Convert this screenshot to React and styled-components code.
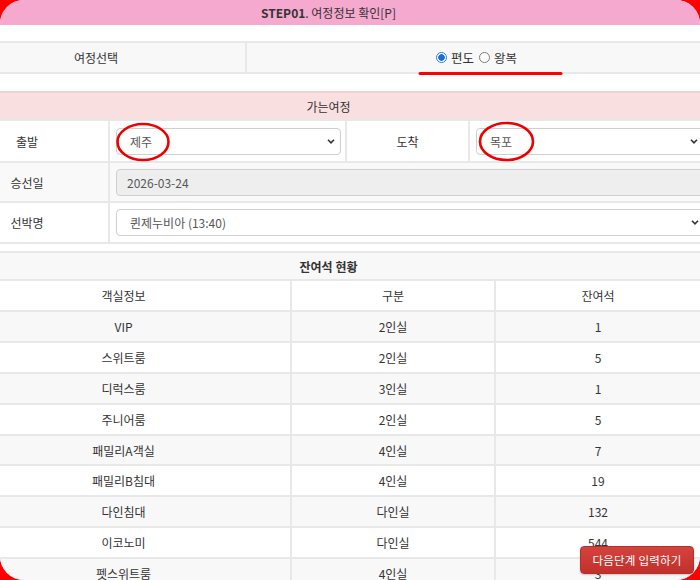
import React from "react";
import styled, { createGlobalStyle } from "styled-components";

const GlobalStyle = createGlobalStyle`
  *, *::before, *::after { box-sizing: border-box; }
  html, body { margin: 0; padding: 0; background: #ff0000; }
  body {
    font-family: "Noto Sans CJK KR", "Noto Sans", sans-serif;
    font-size: 12px;
    color: #333;
  }
`;

const Frame = styled.div`
  position: relative;
  width: 700px;
  height: 580px;
  border-radius: 24px;
  overflow: hidden;
  background: #fff;
`;

const Page = styled.div`
  width: 760px;
  margin-left: -43px;
  display: flex;
  flex-direction: column;
`;

const TitleBar = styled.div`
  width: 743px;
  height: 25px;
  background: #f5a9cf;
  display: flex;
  align-items: center;
  justify-content: center;
  font-size: 12px;
  color: #333;
  b { font-weight: 700; }
`;

const Spacer = styled.div`
  height: ${(p) => p.$h}px;
`;

const RouteRow = styled.div`
  width: 743px;
  height: 33px;
  display: grid;
  grid-template-columns: 290px 1fr;
  background: #f8f8f8;
  border-top: 2px solid #e8e8e8;
  border-bottom: 2px solid #e8e8e8;
`;

const RouteLabel = styled.div`
  display: flex;
  align-items: center;
  justify-content: center;
  padding-right: 10px;
  border-right: 2px solid #e8e8e8;
`;

const RadioGroup = styled.div`
  display: flex;
  align-items: center;
  justify-content: center;
  padding-left: 8px;
  gap: 3px;
  font-size: 12.5px;
  color: #333;
`;

const RadioDot = styled.span`
  display: inline-block;
  width: 11px;
  height: 11px;
  border-radius: 50%;
  border: 1px solid ${(p) => (p.$on ? "#2b7bd6" : "#7a7a7a")};
  background: ${(p) =>
    p.$on ? "radial-gradient(circle, #1a6fd6 0 3px, #fff 3.5px)" : "#fff"};
  margin-right: 1px;
`;

const RadioText = styled.span`
  margin-right: 2px;
`;

const SectionHead = styled.div`
  width: 743px;
  height: 30px;
  display: flex;
  align-items: center;
  justify-content: center;
  background: ${(p) => p.$bg};
  border-top: 2px solid ${(p) => p.$line};
  border-bottom: 2px solid #e8e8e8;
  font-weight: ${(p) => (p.$bold ? 700 : 400)};
  color: #333;
`;

const FormRow = styled.div`
  width: 760px;
  height: ${(p) => p.$h}px;
  display: grid;
  grid-template-columns: ${(p) => p.$cols};
  background: ${(p) => p.$bg || "#fff"};
  border-bottom: 2px solid #e8e8e8;
`;

const LabelCell = styled.div`
  display: flex;
  align-items: center;
  justify-content: center;
  padding-right: ${(p) => p.$pr || 0}px;
  border-right: 2px solid #e8e8e8;
  color: #333;
`;

const FieldCell = styled.div`
  display: flex;
  align-items: center;
  padding-left: 6px;
  border-right: ${(p) => (p.$divider ? "2px solid #e8e8e8" : "none")};
`;

const SelectBox = styled.div`
  width: ${(p) => p.$w}px;
  flex: none;
  height: 27px;
  border: 1px solid #cfcfcf;
  border-radius: 4px;
  background: #fff;
  display: flex;
  align-items: center;
  justify-content: space-between;
  padding: 0 5px 0 13px;
  color: #555;
`;

const DateInput = styled.div`
  width: 589px;
  flex: none;
  height: 27px;
  border: 1px solid #cfcfcf;
  border-radius: 4px;
  background: #eeeeee;
  display: flex;
  align-items: center;
  padding-left: 10px;
  color: #555;
`;

const Table = styled.div`
  width: 743px;
  display: flex;
  flex-direction: column;
`;

const TRow = styled.div`
  height: ${(p) => p.$h}px;
  flex: none;
  display: grid;
  grid-template-columns: 335px 204px 1fr;
  background: ${(p) => (p.$stripe ? "#f8f8f8" : "#fff")};
  border-bottom: 2px solid #e8e8e8;
`;

const TCell = styled.div`
  display: flex;
  align-items: center;
  justify-content: center;
  color: #333;
  border-right: ${(p) => (p.$last ? "none" : "2px solid #e8e8e8")};
`;

const NextButton = styled.button`
  position: absolute;
  right: 6px;
  bottom: 6px;
  width: 114px;
  height: 28px;
  border: 1px solid #b3312d;
  border-radius: 4px;
  background: linear-gradient(#d5433f, #c2302c);
  color: #fff;
  font-family: "Noto Sans CJK KR", "Noto Sans", sans-serif;
  font-size: 11.5px;
  letter-spacing: 0.2px;
  padding: 0;
  cursor: pointer;
  box-shadow: 0 1px 2px rgba(0, 0, 0, 0.2);
`;

const Marks = styled.svg`
  position: absolute;
  left: 0;
  top: 0;
  width: 700px;
  height: 580px;
  pointer-events: none;
`;

const Chevron = () => (
  <svg width="8" height="5" viewBox="0 0 8 5">
    <path d="M1 0.8 L4 3.8 L7 0.8" fill="none" stroke="#333" strokeWidth="1.6" />
  </svg>
);

const rooms = [
  ["VIP", "2인실", "1"],
  ["스위트룸", "2인실", "5"],
  ["디럭스룸", "3인실", "1"],
  ["주니어룸", "2인실", "5"],
  ["패밀리A객실", "4인실", "7"],
  ["패밀리B침대", "4인실", "19"],
  ["다인침대", "다인실", "132"],
  ["이코노미", "다인실", "544"],
  ["펫스위트룸", "4인실", "3"],
];

export default function App() {
  return (
    <>
      <GlobalStyle />
      <Frame>
        <Page>
          <TitleBar>
            <b>STEP01</b>. 여정정보 확인[P]
          </TitleBar>
          <Spacer $h={16} />
          <RouteRow>
            <RouteLabel>여정선택</RouteLabel>
            <RadioGroup>
              <RadioDot $on />
              <RadioText>편도</RadioText>
              <RadioDot />
              <RadioText>왕복</RadioText>
            </RadioGroup>
          </RouteRow>
          <Spacer $h={17} />
          <SectionHead $bg="#f9dfe0" $line="#f1d2d3">가는여정</SectionHead>
          <FormRow $h={42} $cols="153px 237px 123px 1fr">
            <LabelCell $pr={11}>출발</LabelCell>
            <FieldCell $divider>
              <SelectBox $w={225}>
                제주
                <Chevron />
              </SelectBox>
            </FieldCell>
            <LabelCell>도착</LabelCell>
            <FieldCell>
              <SelectBox $w={228}>
                목포
                <Chevron />
              </SelectBox>
            </FieldCell>
          </FormRow>
          <FormRow $h={40} $cols="153px 1fr" $bg="#f9f9f9">
            <LabelCell $pr={11}>승선일</LabelCell>
            <FieldCell>
              <DateInput>2026-03-24</DateInput>
            </FieldCell>
          </FormRow>
          <FormRow $h={41} $cols="153px 1fr">
            <LabelCell $pr={11}>선박명</LabelCell>
            <FieldCell>
              <SelectBox $w={589}>
                퀸제누비아 (13:40)
                <Chevron />
              </SelectBox>
            </FieldCell>
          </FormRow>
          <Spacer $h={7} />
          <SectionHead $bg="#f8f8f8" $line="#e8e8e8" $bold>
            잔여석 현황
          </SectionHead>
          <Table>
            <TRow $h={31}>
              <TCell>객실정보</TCell>
              <TCell>구분</TCell>
              <TCell $last>잔여석</TCell>
            </TRow>
            {rooms.map((r, i) => (
              <TRow key={r[0]} $h={30.9} $stripe={i % 2 === 0}>
                <TCell>{r[0]}</TCell>
                <TCell>{r[1]}</TCell>
                <TCell $last>{r[2]}</TCell>
              </TRow>
            ))}
          </Table>
        </Page>
        <Marks viewBox="0 0 700 580">
          <ellipse cx="143" cy="142" rx="25.5" ry="18" fill="none" stroke="#ee0000" strokeWidth="2.6" />
          <ellipse cx="506.5" cy="141.5" rx="26.5" ry="18.5" fill="none" stroke="#ee0000" strokeWidth="2.6" />
          <line x1="420" y1="73.5" x2="561" y2="73.5" stroke="#ff0000" strokeWidth="3" strokeLinecap="round" />
        </Marks>
        <NextButton>다음단계 입력하기</NextButton>
      </Frame>
    </>
  );
}
